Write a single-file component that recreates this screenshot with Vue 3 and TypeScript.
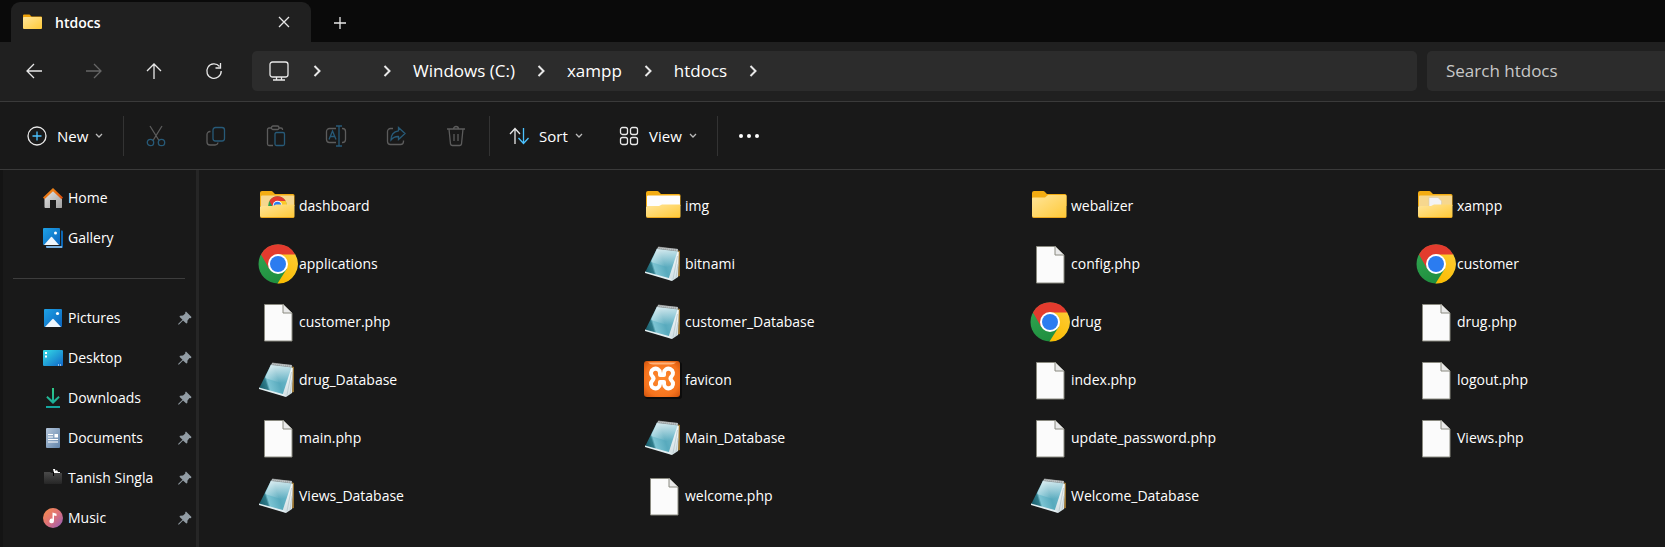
<script setup lang="ts">
type Kind = 'folder' | 'folder-chrome' | 'folder-white' | 'folder-doc' | 'chrome' | 'note' | 'page' | 'xampp'

interface FileItem {
  name: string
  kind: Kind
}

interface Place {
  name: string
  icon: string
}

const files: FileItem[] = [
  { name: 'dashboard', kind: 'folder-chrome' },
  { name: 'img', kind: 'folder-white' },
  { name: 'webalizer', kind: 'folder' },
  { name: 'xampp', kind: 'folder-doc' },
  { name: 'applications', kind: 'chrome' },
  { name: 'bitnami', kind: 'note' },
  { name: 'config.php', kind: 'page' },
  { name: 'customer', kind: 'chrome' },
  { name: 'customer.php', kind: 'page' },
  { name: 'customer_Database', kind: 'note' },
  { name: 'drug', kind: 'chrome' },
  { name: 'drug.php', kind: 'page' },
  { name: 'drug_Database', kind: 'note' },
  { name: 'favicon', kind: 'xampp' },
  { name: 'index.php', kind: 'page' },
  { name: 'logout.php', kind: 'page' },
  { name: 'main.php', kind: 'page' },
  { name: 'Main_Database', kind: 'note' },
  { name: 'update_password.php', kind: 'page' },
  { name: 'Views.php', kind: 'page' },
  { name: 'Views_Database', kind: 'note' },
  { name: 'welcome.php', kind: 'page' },
  { name: 'Welcome_Database', kind: 'note' },
]

const top: Place[] = [
  { name: 'Home', icon: 'home' },
  { name: 'Gallery', icon: 'gallery' },
]

const pinned: Place[] = [
  { name: 'Pictures', icon: 'pictures' },
  { name: 'Desktop', icon: 'desktop' },
  { name: 'Downloads', icon: 'downloads' },
  { name: 'Documents', icon: 'documents' },
  { name: 'Tanish Singla', icon: 'dark-folder' },
  { name: 'Music', icon: 'music' },
]

const crumbs: string[] = ['', 'Windows (C:)', 'xampp', 'htdocs']
</script>

<template>
  <div class="explorer">
    <svg class="defs" width="0" height="0" aria-hidden="true">
      <defs>
        <linearGradient id="g-folder" x1="0" y1="0" x2="1" y2="1">
          <stop offset="0" stop-color="#ffe59a" /><stop offset="1" stop-color="#ffc937" />
        </linearGradient>
        <linearGradient id="g-blue" x1="0" y1="0" x2="1" y2="1">
          <stop offset="0" stop-color="#1ea2e6" /><stop offset="1" stop-color="#0a63bd" />
        </linearGradient>
        <linearGradient id="g-desk" x1="0" y1="0" x2="1" y2="1">
          <stop offset="0" stop-color="#35dce6" /><stop offset="1" stop-color="#0f66c8" />
        </linearGradient>
        <linearGradient id="g-down" x1="0" y1="0" x2="0" y2="1">
          <stop offset="0" stop-color="#30c988" /><stop offset="1" stop-color="#14a3a0" />
        </linearGradient>
        <linearGradient id="g-doc" x1="0" y1="0" x2="1" y2="1">
          <stop offset="0" stop-color="#b4c6da" /><stop offset="1" stop-color="#6184ab" />
        </linearGradient>
        <linearGradient id="g-music" x1="0" y1="0" x2="1" y2="1">
          <stop offset="0" stop-color="#f79047" /><stop offset="0.5" stop-color="#df7178" /><stop offset="1" stop-color="#8d5bbd" />
        </linearGradient>
        <linearGradient id="g-wall" x1="0" y1="0" x2="1" y2="1">
          <stop offset="0" stop-color="#e6e6e6" /><stop offset="1" stop-color="#a0a0a0" />
        </linearGradient>
        <linearGradient id="g-roof" x1="0" y1="0" x2="1" y2="1">
          <stop offset="0" stop-color="#f79a1c" /><stop offset="1" stop-color="#d8480b" />
        </linearGradient>
        <linearGradient id="g-dark" x1="0" y1="0" x2="0" y2="1">
          <stop offset="0" stop-color="#4a4a4a" /><stop offset="1" stop-color="#262626" />
        </linearGradient>
        <linearGradient id="g-note" x1="0" y1="0.9" x2="1" y2="0.6">
          <stop offset="0" stop-color="#10525f" /><stop offset="0.28" stop-color="#2f7c8b" />
          <stop offset="0.34" stop-color="#7cc4d3" /><stop offset="0.65" stop-color="#58aabd" /><stop offset="1" stop-color="#6fb9cb" />
        </linearGradient>
        <linearGradient id="g-shine" x1="0" y1="0" x2="0.3" y2="1">
          <stop offset="0" stop-color="#fff" stop-opacity="0.85" /><stop offset="1" stop-color="#fff" stop-opacity="0" />
        </linearGradient>
        <linearGradient id="g-page" x1="0" y1="0" x2="0" y2="1">
          <stop offset="0" stop-color="#f4fafb" /><stop offset="1" stop-color="#d2dfe3" />
        </linearGradient>
        <radialGradient id="g-orange" cx="0.5" cy="0.5" r="0.7">
          <stop offset="0" stop-color="#ff8a2e" /><stop offset="0.7" stop-color="#f5731e" /><stop offset="1" stop-color="#cf520c" />
        </radialGradient>
        <linearGradient id="g-green" x1="0" y1="0" x2="0.5" y2="1">
          <stop offset="0" stop-color="#34a853" /><stop offset="1" stop-color="#1e8e3e" />
        </linearGradient>
        <linearGradient id="g-yellow" x1="1" y1="0" x2="0.4" y2="1">
          <stop offset="0" stop-color="#fdcc35" /><stop offset="1" stop-color="#fbbc04" />
        </linearGradient>
        <symbol id="chrome" viewBox="0 0 40 40">
          <circle cx="20" cy="20" r="19.500" fill="url(#g-green)" />
          <path d="M20 10h17a19.500 19.500 0 0 1-17.500 29.500L28.700 25z" fill="url(#g-yellow)" />
          <path d="M3 10.400A19.500 19.500 0 0 1 37.200 10.500H20L11.300 25z" fill="#e33b2e" />
          <circle cx="20" cy="20" r="10" fill="#fff" />
          <circle cx="20" cy="20" r="8" fill="#2b7cf0" />
        </symbol>
      </defs>
    </svg>

    <header class="tabbar">
      <div class="tab">
        <svg class="tab-icon" width="19" height="16" viewBox="0 0 19 16">
          <path d="M0 1.500Q0 .5 1 .5h5.500l2 2H18q1 0 1 1v3H0z" fill="#f0a30c" />
          <rect y="3" width="19" height="12" rx="1" fill="url(#g-folder)" />
        </svg>
        <span class="tab-title">htdocs</span>
        <button class="icon-btn tab-close" aria-label="Close tab">
          <svg width="12" height="12" viewBox="0 0 12 12"><path d="M1 1l10 10M11 1L1 11" /></svg>
        </button>
      </div>
      <button class="icon-btn tab-new" aria-label="New tab">
        <svg width="14" height="14" viewBox="0 0 14 14"><path d="M7 1v12M1 7h12" /></svg>
      </button>
    </header>

    <nav class="navbar">
      <div class="nav-buttons">
        <button class="icon-btn nav-btn" aria-label="Back">
          <svg width="18" height="18" viewBox="0 0 18 18"><path d="M17 9H2M9 2L2 9l7 7" /></svg>
        </button>
        <button class="icon-btn nav-btn" aria-label="Forward" disabled>
          <svg width="18" height="18" viewBox="0 0 18 18"><path d="M1 9h15M9 2l7 7-7 7" /></svg>
        </button>
        <button class="icon-btn nav-btn" aria-label="Up">
          <svg width="18" height="18" viewBox="0 0 18 18"><path d="M9 17V2M2 9l7-7 7 7" /></svg>
        </button>
        <button class="icon-btn nav-btn" aria-label="Refresh">
          <svg width="18" height="18" viewBox="0 0 18 18"><path d="M14.500 4.500A7.200 7.200 0 1 0 16.200 9M15.500 1v5h-5" /></svg>
        </button>
      </div>
      <div class="address">
        <svg class="monitor" width="20" height="20" viewBox="0 0 20 20">
          <rect x="1" y="1" width="18" height="15" rx="2.500" /><path d="M7.500 16v3M12.500 16v3M4 19h12" />
        </svg>
        <template v-for="(crumb, i) in crumbs" :key="i">
          <svg class="sep" width="8" height="12" viewBox="0 0 8 12"><path d="M1.500 1l5 5-5 5" /></svg>
          <a v-if="crumb" class="crumb" href="#">{{ crumb }}</a>
          <span v-else class="crumb-blank"></span>
        </template>
        <svg class="sep" width="8" height="12" viewBox="0 0 8 12"><path d="M1.500 1l5 5-5 5" /></svg>
      </div>
      <input class="search" type="text" placeholder="Search htdocs" aria-label="Search htdocs" />
    </nav>

    <div class="toolbar" role="toolbar">
      <button class="tool new">
        <svg width="20" height="20" viewBox="0 0 20 20"><circle cx="10" cy="10" r="9" /><path class="accent" d="M10 5.500v9M5.500 10h9" /></svg>
        <span>New</span>
        <svg class="chev" width="8" height="6" viewBox="0 0 8 6"><path d="M1 1l3 3 3-3" /></svg>
      </button>
      <span class="rule"></span>
      <div class="dim-group">
        <button class="icon-btn dim" aria-label="Cut" disabled>
          <svg width="20" height="22" viewBox="0 0 20 22"><path d="M4 1l9 14.500M16 1L7 15.500" /><g class="accent"><circle cx="4.500" cy="17.500" r="3.200" /><circle cx="15.500" cy="17.500" r="3.200" /></g></svg>
        </button>
        <button class="icon-btn dim" aria-label="Copy" disabled>
          <svg width="20" height="20" viewBox="0 0 20 20"><path d="M4.500 5.500H4a3 3 0 0 0-3 3V16a3 3 0 0 0 3 3h5a3 3 0 0 0 3-2.500" /><rect class="accent" x="7" y="1.500" width="11.500" height="13.500" rx="2.500" /></svg>
        </button>
        <button class="icon-btn dim" aria-label="Paste" disabled>
          <svg width="20" height="22" viewBox="0 0 20 22"><path d="M5.500 3H3a1.500 1.500 0 0 0-1.500 1.500v14.500A1.500 1.500 0 0 0 3 20.500h4M12.500 3H15a1.500 1.500 0 0 1 1.500 1.500V5" /><rect x="5.500" y="1" width="7.500" height="3.500" rx="1.500" /><rect class="accent" x="9" y="7.500" width="9.500" height="13" rx="1.500" /></svg>
        </button>
        <button class="icon-btn dim" aria-label="Rename" disabled>
          <svg width="22" height="22" viewBox="0 0 22 22"><path d="M11 3.500H4.500a3 3 0 0 0-3 3v8a3 3 0 0 0 3 3H11M17 3.500h.5a3 3 0 0 1 3 3v8a3 3 0 0 1-3 3H17" /><path class="accent" d="M14 1v20M11 1h6M11 21h6M4 14.500L7.500 6 11 14.500M5.200 11.500h4.600" /></svg>
        </button>
        <button class="icon-btn dim" aria-label="Share" disabled>
          <svg width="20" height="20" viewBox="0 0 20 20"><path d="M7 2.500H4.500A3 3 0 0 0 1.500 5.500v10a3 3 0 0 0 3 3h10a3 3 0 0 0 3-3V14.500" /><path class="accent" d="M12.500 1.500L19 7.500l-6.500 6V10.500C9.500 10.300 7 11.500 5 14 5 9 7.500 5.500 12.500 4.800z" /></svg>
        </button>
        <button class="icon-btn dim" aria-label="Delete" disabled>
          <svg width="20" height="22" viewBox="0 0 20 22"><path d="M1 4h18M3 4l1.500 15a2 2 0 0 0 2 1.500h7a2 2 0 0 0 2-1.500L17 4M7.500 4a2.500 2.500 0 0 1 5 0M8 9v7M12 9v7" /></svg>
        </button>
      </div>
      <span class="rule"></span>
      <button class="tool sort">
        <svg width="20" height="18" viewBox="0 0 20 18"><path d="M6 17V2M1 7l5-5.500L11 7" /><path class="accent" d="M14.500 1v15M9.500 11l5 5.500 5-5.500" /></svg>
        <span>Sort</span>
        <svg class="chev" width="8" height="6" viewBox="0 0 8 6"><path d="M1 1l3 3 3-3" /></svg>
      </button>
      <button class="tool view">
        <svg width="20" height="20" viewBox="0 0 20 20"><rect x="1.500" y="1.500" width="7" height="7" rx="2" /><rect x="11.500" y="1.500" width="7" height="7" rx="2" /><rect x="1.500" y="11.500" width="7" height="7" rx="2" /><rect x="11.500" y="11.500" width="7" height="7" rx="2" /></svg>
        <span>View</span>
        <svg class="chev" width="8" height="6" viewBox="0 0 8 6"><path d="M1 1l3 3 3-3" /></svg>
      </button>
      <span class="rule"></span>
      <button class="icon-btn more" aria-label="See more">
        <svg width="20" height="4" viewBox="0 0 20 4"><circle cx="2" cy="2" r="2" /><circle cx="10" cy="2" r="2" /><circle cx="18" cy="2" r="2" /></svg>
      </button>
    </div>

    <div class="body">
      <aside class="sidebar">
        <ul class="places">
          <li v-for="p in top" :key="p.name">
            <a class="place" href="#">
              <svg v-if="p.icon === 'home'" width="20" height="20" viewBox="0 0 20 20">
                <path d="M10 2L1.500 10v9q0 1 1 1H7v-8h6v8h5.500q.5 0 .5-1v-9z" fill="url(#g-wall)" />
                <path d="M10 0L0 9.500l1.500 1.700L10 3.300l8.500 7.900L20 9.500z" fill="url(#g-roof)" />
              </svg>
              <svg v-else width="20" height="20" viewBox="0 0 20 20">
                <path d="M18 2.500h1q1 0 1 1V19q0 1-1 1H4q-1 0-1-1v-.500z" fill="#0c67b5" /><path d="M3 18h16v2H4q-1 0-1-2" fill="#78aede" />
                <rect width="18" height="18" fill="#1b1b1b" /><rect width="17" height="17" rx="1" fill="url(#g-blue)" />
                <path d="M1 17l7-8q.5-.500 1 0l7 8z" fill="#eef6fd" /><circle cx="12.500" cy="5" r="1.500" fill="#fff" />
              </svg>
              <span>{{ p.name }}</span>
            </a>
          </li>
        </ul>
        <hr class="divider" />
        <ul class="places">
          <li v-for="p in pinned" :key="p.name">
            <a class="place" href="#">
              <svg v-if="p.icon === 'pictures'" width="20" height="20" viewBox="0 0 20 20">
                <rect x="1" y="1" width="18" height="18" rx="1" fill="url(#g-blue)" />
                <path d="M2 19l7.500-8q.5-.500 1 0L18 19z" fill="#eef6fd" /><circle cx="14.500" cy="5.500" r="1.600" fill="#fff" />
              </svg>
              <svg v-else-if="p.icon === 'desktop'" width="20" height="20" viewBox="0 0 20 20">
                <rect y="2" width="20" height="16" rx="1" fill="url(#g-desk)" />
                <path d="M2 4h2v2H2zM2 7.500h2v2H2zM15 16.500h1v1h-1zM17 16.500h1v1h-1z" fill="#fff" />
              </svg>
              <svg v-else-if="p.icon === 'downloads'" width="20" height="20" viewBox="0 0 20 20">
                <path d="M9 0h2v12l4.500-4 1.200 1.500L10 16 3.300 9.500 4.500 8 9 12zM3 18h14v2H3z" fill="url(#g-down)" />
              </svg>
              <svg v-else-if="p.icon === 'documents'" width="20" height="20" viewBox="0 0 20 20">
                <rect x="3" width="14" height="20" rx="1" fill="url(#g-doc)" />
                <path d="M5 6h5v1H5zM5 8.500h5v1H5zM11.500 6H15v3.500h-3.500zM5 11h10v1H5zM5 13.500h10v1H5z" fill="#fff" />
              </svg>
              <svg v-else-if="p.icon === 'dark-folder'" width="20" height="20" viewBox="0 0 20 20">
                <path d="M1 4h6l1.500 1H19v10q0 1-1 1H2q-1 0-1-1z" fill="url(#g-dark)" />
                <path d="M10 1h2l.5 2 1.500-1 1 2h2v1h-6z" fill="#fff" /><path d="M10 4h1v4h-1z" fill="#000" />
              </svg>
              <svg v-else width="20" height="20" viewBox="0 0 20 20">
                <circle cx="10" cy="10" r="10" fill="url(#g-music)" />
                <path d="M9.500 4.500l4 1.200v2.300l-2.500-.600V13a2.300 2.300 0 1 1-1.500-2.200z" fill="#fff" />
              </svg>
              <span>{{ p.name }}</span>
              <svg class="pin" width="14" height="14" viewBox="0 0 14 14"><path d="M8 0.500L13.500 6 12.800 7.200 11.500 7 9.500 9.500 9.300 12 8.300 12.500 5 9.500 1 13.500 0 13.500 0.500 12.500 4.500 8.800 1.500 5.700 2 4.700 5 4.500 7.300 2.500 7.200 1.200z" /></svg>
            </a>
          </li>
        </ul>
      </aside>

      <main class="files">
        <a v-for="f in files" :key="f.name" class="file" href="#">
          <svg v-if="f.kind === 'chrome'" width="40" height="40" viewBox="0 0 40 40"><use href="#chrome" /></svg>
          <svg v-else-if="f.kind === 'page'" width="40" height="40" viewBox="0 0 40 40">
            <path d="M6.500 2.500h19l8.500 8.500v28H6.500z" fill="#fbfbfb" stroke="#8a8a80" />
            <path d="M25 2.500v8.500h9" fill="#e9e9e9" stroke="#8a8a80" />
          </svg>
          <svg v-else-if="f.kind === 'note'" width="40" height="40" viewBox="0 0 40 40">
            <path d="M33 6l3 1v25l-4 1z" fill="#94702f" />
            <path d="M13 4.500l21 2.500-6.500 29L1 28.500z" fill="url(#g-note)" />
            <path d="M13 4.500l21 2.500-5 18-22-7z" fill="url(#g-shine)" />
            <path d="M33.500 7.500l1.300.5L34 33l-6 4-3.500-2z" fill="url(#g-page)" />
            <path d="M33.500 12L29 35M34 20l-2 14" stroke="#b2c3c9" stroke-width=".7" />
            <path d="M1 27.500l25.500 7 1.500 2.500L1 29z" fill="#e3eff2" />
            <path d="M14 3l20 2v2.500l-21-2.500z" fill="#8d9799" /><path d="M14.500 3.500l19.500 2.500" stroke="#dcdcdc" stroke-width="2" stroke-dasharray="1 1" />
          </svg>
          <svg v-else-if="f.kind === 'xampp'" width="40" height="40" viewBox="0 0 40 40">
            <rect x="1" y="2" width="37" height="37" rx="3" fill="#0c0c0c" />
            <rect y="1" width="36" height="36" rx="3" fill="url(#g-orange)" />
            <path d="M4 2.500h28q-2 2-5 2H9q-3 0-5-2" fill="#ffb27a" />
            <path d="M16 15V13a4.500 4.500 0 1 0-7.500 3.500q2 2 0 4a4.500 4.500 0 1 0 7.500 3.500V22h4v2a4.500 4.500 0 1 0 7.500-3.500q-2-2 0-4A4.500 4.500 0 1 0 20 13v2z" fill="none" stroke="#fff" stroke-width="4" stroke-linejoin="round" />
          </svg>
          <svg v-else width="40" height="40" viewBox="0 0 40 40">
            <path d="M2 7q0-2 2-2h9.500q1 0 2 1.500L17 8h18q1.500 0 1.500 1.500V20H2z" fill="#f3ac12" />
            <template v-if="f.kind === 'folder'">
              <path d="M2 12.500q0-1 1-1h12l3-2.500h17.500q1 0 1 1v20q0 1.500-1.500 1.500H3.500Q2 31.500 2 30z" fill="url(#g-folder)" />
            </template>
            <template v-else>
              <rect x="3" y="9.500" width="33" height="15" rx="1" :fill="f.kind === 'folder-white' ? '#fdfdfd' : '#f6d78e'" />
              <svg v-if="f.kind === 'folder-chrome'" x="10" y="10" width="19" height="19"><use href="#chrome" width="19" height="19" /></svg>
              <path v-if="f.kind === 'folder-doc'" d="M13 11.500h9l3.500 3.500v8H13z" fill="#f3f3f3" stroke="#cfc7b0" stroke-width=".5" />
              <path d="M2 21q0-1 1-1h12l3-1.500h17.500q1 0 1 1V30q0 1.500-1.500 1.500H3.500Q2 31.500 2 30z" fill="url(#g-folder)" />
            </template>
            <path d="M2.500 31q.5.500 1.500.500h31q1 0 1.300-.500" fill="none" stroke="#eaa51c" />
          </svg>
          <span>{{ f.name }}</span>
        </a>
      </main>
    </div>
  </div>
</template>

<style>
html, body { background: #191919; }
</style>

<style scoped>
* { box-sizing: border-box; }
.explorer {
  min-height: 100vh;
  display: flex;
  flex-direction: column;
  background: #191919;
  color: #fff;
  font-family: "Segoe UI", "Open Sans", "Noto Sans", sans-serif;
  font-size: 14px;
  line-height: 20px;
  overflow: hidden;
}
.defs { position: absolute; }
svg { flex: none; }
a { color: inherit; text-decoration: none; }
button {
  padding: 0;
  border: 0;
  background: none;
  color: inherit;
  font: inherit;
}
.icon-btn { display: flex; align-items: center; justify-content: center; }
.icon-btn svg, .tool svg, .monitor, .sep { fill: none; stroke: #e8e8e8; stroke-width: 1.3; }
.tabbar {
  display: flex;
  align-items: stretch;
  height: 42px;
  padding: 2px 0 0 11px;
  background: #0a0a0a;
}
.tab {
  display: flex;
  align-items: center;
  width: 300px;
  padding: 0 14px 0 12px;
  border-radius: 9px 9px 0 0;
  background: #202020;
}
.tab-title { flex: 1; margin-left: 13px; padding-top: 2px; font-weight: 600; }
.tab-close { width: 26px; height: 26px; }
.tab-new { width: 58px; padding-top: 2px; }
.navbar {
  display: flex;
  align-items: center;
  height: 60px;
  padding-bottom: 2px;
  background: #202020;
  border-bottom: 1px solid #3a3a3a;
}
.nav-buttons { display: flex; padding-left: 4px; width: 252px; }
.nav-btn { width: 60px; height: 40px; }
.nav-btn:disabled svg { stroke: #666; }
.address {
  flex: 1;
  display: flex;
  align-items: center;
  height: 40px;
  margin-right: 10px;
  padding-left: 17px;
  border-radius: 5px;
  background: #2c2c2c;
  font-size: 17px;
}
.monitor { margin-right: 24px; }
.sep { stroke-width: 2; margin-right: 22px; }
.crumb { margin-right: 22px; }
.crumb-blank { width: 40px; }
.search {
  width: 238px;
  height: 40px;
  padding: 0 19px;
  border: 0;
  border-radius: 5px 0 0 5px;
  background: #2c2c2c;
  color: #fff;
  font: inherit;
  font-size: 17px;
}
.search::placeholder { color: #c8c8c8; opacity: 1; }
.toolbar {
  display: flex;
  align-items: center;
  height: 68px;
  border-bottom: 1px solid #3a3a3a;
}
.tool { display: flex; align-items: center; height: 40px; font-size: 15px; }
.tool span { margin: 0 7px 0 10px; }
.tool .accent { stroke: #4cc2ff; }
.tool .chev { stroke: #bbb; }
.new { width: 123px; padding-left: 27px; }
.sort { width: 110px; padding-left: 19px; }
.view { width: 117px; padding-left: 19px; }
.rule { width: 1px; height: 40px; background: #333; }
.dim-group { display: flex; padding: 0 3px 0 2px; }
.dim { width: 60px; height: 40px; }
.dim svg { stroke: #5c5c5c; }
.dim .accent { stroke: #275a78; }
.more { width: 61px; height: 40px; }
.more svg { fill: #fff; stroke: none; }
.body { flex: 1; display: flex; }
.sidebar {
  width: 199px;
  padding-top: 8px;
  border-left: 3px solid #141414;
  border-right: 3px solid #262626;
}
.places { margin: 0; padding: 0; list-style: none; }
.place {
  display: flex;
  align-items: center;
  gap: 5px;
  height: 40px;
  padding: 0 4px 0 40px;
}
.pin { margin-left: auto; fill: #929ca4; }
.divider { height: 1px; margin: 20px 11px 19px 10px; border: 0; background: #3d3d3d; }
.files {
  flex: 1;
  display: grid;
  grid-template-columns: minmax(0, 386fr) minmax(0, 386fr) minmax(0, 386fr) minmax(0, 249fr);
  grid-auto-rows: 58px;
  padding: 7px 0 0 59px;
}
.file { display: flex; align-items: center; gap: 1px; }
</style>
